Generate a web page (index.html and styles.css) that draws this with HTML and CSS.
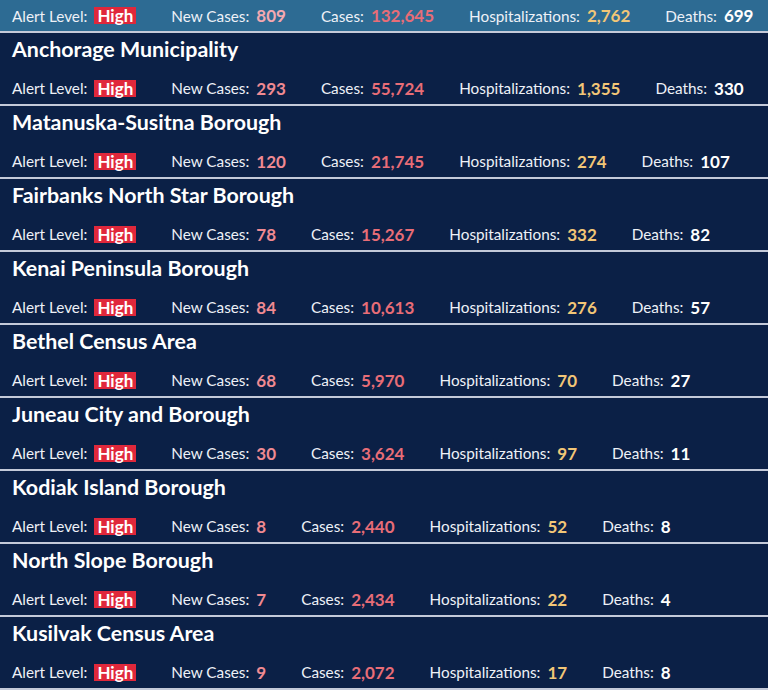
FILE: index.html
```html
<!DOCTYPE html>
<html lang="en">
<head>
<meta charset="utf-8">
<title>Alaska COVID-19 Alert Levels</title>
<link rel="stylesheet" href="styles.css">
</head>
<body>
<div class="board">
  <div class="summary">
    <div class="stats">
      <span class="stat"><span class="label">Alert Level:</span><span class="badge">High</span></span>
      <span class="stat"><span class="label">New Cases:</span><span class="val new top">809</span></span>
      <span class="stat"><span class="label">Cases:</span><span class="val cases">132,645</span></span>
      <span class="stat"><span class="label">Hospitalizations:</span><span class="val hosp">2,762</span></span>
      <span class="stat"><span class="label">Deaths:</span><span class="val deaths">699</span></span>
    </div>
  </div>

  <div class="county">
    <h2 class="name">Anchorage Municipality</h2>
    <div class="stats">
      <span class="stat"><span class="label">Alert Level:</span><span class="badge">High</span></span>
      <span class="stat"><span class="label">New Cases:</span><span class="val new">293</span></span>
      <span class="stat"><span class="label">Cases:</span><span class="val cases">55,724</span></span>
      <span class="stat"><span class="label">Hospitalizations:</span><span class="val hosp">1,355</span></span>
      <span class="stat"><span class="label">Deaths:</span><span class="val deaths">330</span></span>
    </div>
  </div>

  <div class="county">
    <h2 class="name">Matanuska-Susitna Borough</h2>
    <div class="stats">
      <span class="stat"><span class="label">Alert Level:</span><span class="badge">High</span></span>
      <span class="stat"><span class="label">New Cases:</span><span class="val new">120</span></span>
      <span class="stat"><span class="label">Cases:</span><span class="val cases">21,745</span></span>
      <span class="stat"><span class="label">Hospitalizations:</span><span class="val hosp">274</span></span>
      <span class="stat"><span class="label">Deaths:</span><span class="val deaths">107</span></span>
    </div>
  </div>

  <div class="county">
    <h2 class="name">Fairbanks North Star Borough</h2>
    <div class="stats">
      <span class="stat"><span class="label">Alert Level:</span><span class="badge">High</span></span>
      <span class="stat"><span class="label">New Cases:</span><span class="val new">78</span></span>
      <span class="stat"><span class="label">Cases:</span><span class="val cases">15,267</span></span>
      <span class="stat"><span class="label">Hospitalizations:</span><span class="val hosp">332</span></span>
      <span class="stat"><span class="label">Deaths:</span><span class="val deaths">82</span></span>
    </div>
  </div>

  <div class="county">
    <h2 class="name">Kenai Peninsula Borough</h2>
    <div class="stats">
      <span class="stat"><span class="label">Alert Level:</span><span class="badge">High</span></span>
      <span class="stat"><span class="label">New Cases:</span><span class="val new">84</span></span>
      <span class="stat"><span class="label">Cases:</span><span class="val cases">10,613</span></span>
      <span class="stat"><span class="label">Hospitalizations:</span><span class="val hosp">276</span></span>
      <span class="stat"><span class="label">Deaths:</span><span class="val deaths">57</span></span>
    </div>
  </div>

  <div class="county">
    <h2 class="name">Bethel Census Area</h2>
    <div class="stats">
      <span class="stat"><span class="label">Alert Level:</span><span class="badge">High</span></span>
      <span class="stat"><span class="label">New Cases:</span><span class="val new">68</span></span>
      <span class="stat"><span class="label">Cases:</span><span class="val cases">5,970</span></span>
      <span class="stat"><span class="label">Hospitalizations:</span><span class="val hosp">70</span></span>
      <span class="stat"><span class="label">Deaths:</span><span class="val deaths">27</span></span>
    </div>
  </div>

  <div class="county">
    <h2 class="name">Juneau City and Borough</h2>
    <div class="stats">
      <span class="stat"><span class="label">Alert Level:</span><span class="badge">High</span></span>
      <span class="stat"><span class="label">New Cases:</span><span class="val new">30</span></span>
      <span class="stat"><span class="label">Cases:</span><span class="val cases">3,624</span></span>
      <span class="stat"><span class="label">Hospitalizations:</span><span class="val hosp">97</span></span>
      <span class="stat"><span class="label">Deaths:</span><span class="val deaths">11</span></span>
    </div>
  </div>

  <div class="county">
    <h2 class="name">Kodiak Island Borough</h2>
    <div class="stats">
      <span class="stat"><span class="label">Alert Level:</span><span class="badge">High</span></span>
      <span class="stat"><span class="label">New Cases:</span><span class="val new">8</span></span>
      <span class="stat"><span class="label">Cases:</span><span class="val cases">2,440</span></span>
      <span class="stat"><span class="label">Hospitalizations:</span><span class="val hosp">52</span></span>
      <span class="stat"><span class="label">Deaths:</span><span class="val deaths">8</span></span>
    </div>
  </div>

  <div class="county">
    <h2 class="name">North Slope Borough</h2>
    <div class="stats">
      <span class="stat"><span class="label">Alert Level:</span><span class="badge">High</span></span>
      <span class="stat"><span class="label">New Cases:</span><span class="val new">7</span></span>
      <span class="stat"><span class="label">Cases:</span><span class="val cases">2,434</span></span>
      <span class="stat"><span class="label">Hospitalizations:</span><span class="val hosp">22</span></span>
      <span class="stat"><span class="label">Deaths:</span><span class="val deaths">4</span></span>
    </div>
  </div>

  <div class="county">
    <h2 class="name">Kusilvak Census Area</h2>
    <div class="stats">
      <span class="stat"><span class="label">Alert Level:</span><span class="badge">High</span></span>
      <span class="stat"><span class="label">New Cases:</span><span class="val new">9</span></span>
      <span class="stat"><span class="label">Cases:</span><span class="val cases">2,072</span></span>
      <span class="stat"><span class="label">Hospitalizations:</span><span class="val hosp">17</span></span>
      <span class="stat"><span class="label">Deaths:</span><span class="val deaths">8</span></span>
    </div>
  </div>
</div>
</body>
</html>
```

FILE: styles.css
```css
* { box-sizing: border-box; }

html, body {
  margin: 0;
  padding: 0;
  background: #0b2046;
}

body {
  font-family: Lato, "Open Sans", sans-serif;
  color: #eef1f7;
  width: 768px;
  height: 690px;
  overflow: hidden;
}

.board {
  display: flex;
  flex-direction: column;
}

.summary {
  height: 33px;
  background: #2d6b93;
  border-bottom: 2px solid #c4cad9;
  padding: 0 12px;
  display: flex;
  align-items: center;
}

.county {
  height: 73px;
  padding: 0 12px;
  border-bottom: 2px solid #c4cad9;
  display: flex;
  flex-direction: column;
}

.name {
  margin: 0;
  height: 32px;
  line-height: 32px;
  font-size: 21.4px;
  font-weight: 700;
  color: #ffffff;
  white-space: nowrap;
}

.county .stats {
  margin-top: 12px;
}

.stats {
  display: flex;
  align-items: center;
  gap: 35px;
  height: 22px;
  white-space: nowrap;
}

.stat {
  display: flex;
  align-items: center;
  gap: 7px;
}

.label {
  font-size: 15.3px;
  color: #eef1f7;
}

.val {
  font-size: 17px;
  font-weight: 700;
}

.new { color: #f08a92; }
.new.top { color: #f3a9b1; }
.cases { color: #e86d77; }
.hosp { color: #f2c677; }
.deaths { color: #ffffff; }

.badge {
  display: inline-block;
  background: #e0283b;
  color: #ffffff;
  font-size: 17px;
  font-weight: 700;
  line-height: 17px;
  height: 17px;
  padding: 0 3px;
}
```
